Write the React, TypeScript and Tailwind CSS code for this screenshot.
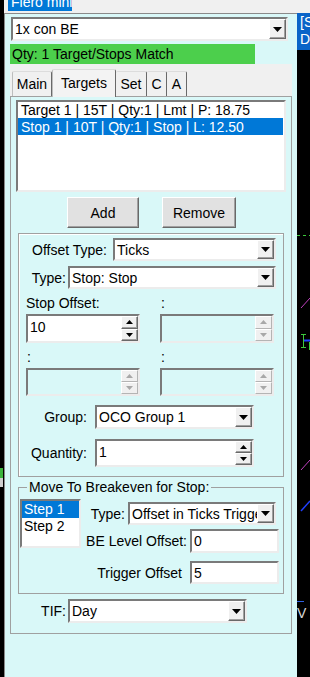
import React from "react";

const SUNKEN =
  "border-2 border-t-[#7a7a7a] border-l-[#7a7a7a] border-b-[#ececec] border-r-[#ececec]";
const RAISED =
  "border border-t-white border-l-white border-b-[#696969] border-r-[#696969] shadow-[inset_-1px_-1px_0_#a0a0a0]";
const RAISED_OFF =
  "border border-t-white border-l-white border-b-[#b4b4b4] border-r-[#b4b4b4]";

function Arrow({ up, w, h, color }: { up?: boolean; w: number; h: number; color: string }) {
  const pts = up ? `0,${h} ${w},${h} ${w / 2},0` : `0,0 ${w},0 ${w / 2},${h}`;
  return (
    <svg width={w} height={h} viewBox={`0 0 ${w} ${h}`}>
      <polygon points={pts} fill={color} />
    </svg>
  );
}

function Combo({ value, className }: { value: string; className: string }) {
  return (
    <div className={`flex bg-white ${SUNKEN} ${className}`}>
      <div className="flex-1 min-w-0 flex items-center pl-[2px] overflow-hidden whitespace-nowrap leading-[16px]">
        {value}
      </div>
      <div className={`w-[17px] shrink-0 bg-[#f0f0f0] flex items-center justify-center ${RAISED}`}>
        <Arrow w={9} h={5} color="#000" />
      </div>
    </div>
  );
}

function Spin({ value, disabled, className }: { value?: string; disabled?: boolean; className: string }) {
  const btn = disabled ? RAISED_OFF : RAISED;
  const c = disabled ? "#a8a8a8" : "#000";
  return (
    <div className={`flex ${disabled ? "bg-[#d9f8f8]" : "bg-white"} ${SUNKEN} ${className}`}>
      <div className="flex-1 min-w-0 pl-[2px] pt-[3px] leading-[16px]">{value}</div>
      <div className="w-[17px] shrink-0 flex flex-col">
        <div className={`flex-1 bg-[#f0f0f0] flex items-center justify-center ${btn}`}>
          <Arrow up w={7} h={4} color={c} />
        </div>
        <div className={`flex-1 bg-[#f0f0f0] flex items-center justify-center ${btn}`}>
          <Arrow w={7} h={4} color={c} />
        </div>
      </div>
    </div>
  );
}

function TextBox({ value, className }: { value: string; className: string }) {
  return (
    <div className={`flex items-center bg-white pl-[2px] leading-[16px] ${SUNKEN} ${className}`}>{value}</div>
  );
}

export default function App() {
  return (
    <div className="w-[310px] h-[677px] bg-black flex flex-col overflow-hidden text-[14px] text-black font-['Liberation_Sans',Arial,sans-serif]">
      {/* title strip */}
      <div className="h-[13px] shrink-0 flex bg-[#f0f0f0]">
        <div className="w-[4px] bg-black" />
        <div className="ml-[4px] w-[64px] h-[11px] bg-[#0078d7] overflow-hidden text-white">
          <span className="block -mt-[6px] pl-[3px] leading-[16px] whitespace-nowrap">Flero mini</span>
        </div>
      </div>

      <div className="flex flex-1 min-h-0">
        {/* left edge */}
        <div className="w-[4px] flex flex-col">
          <div className="h-[455px]" />
          <div className="h-[10px] w-[3px] bg-[#3cb43c]" />
          <div className="h-[9px] w-[3px] bg-[#cfcfcf]" />
        </div>

        {/* panel */}
        <div className="w-[293px] bg-[#d9f8f8] border-t border-l border-[#8a8a8a] flex flex-col">
          <Combo value="1x con BE" className="ml-[6px] mt-[3px] w-[277px] h-[24px]" />

          <div className="ml-[5px] mt-[3px] w-[245px] h-[20px] bg-[#4ccf4c] pl-[2px] flex items-center leading-[16px]">
            Qty: 1 Target/Stops Match
          </div>

          {/* tab control */}
          <div className="ml-[5px] w-[282px] flex flex-col">
            <div className="h-[32px] bg-[#f0f0f0] flex items-end pl-[2px]">
              <div className="w-[40px] h-[25px] border-t border-l border-r border-t-[#dcdcdc] border-l-[#bdbdbd] border-r-[#696969] rounded-t-[2px] text-center pt-[4px] leading-[16px]">
                Main
              </div>
              <div className="relative z-10 -mb-[1px] w-[64px] h-[28px] bg-[#f3f3f3] border-t border-l border-r border-t-[#dcdcdc] border-l-[#bdbdbd] border-r-[#696969] rounded-t-[2px] text-center pt-[5px] leading-[16px]">
                Targets
              </div>
              <div className="w-[31px] h-[25px] border-t border-r border-t-[#dcdcdc] border-r-[#696969] rounded-t-[2px] text-center pt-[4px] leading-[16px]">
                Set
              </div>
              <div className="w-[20px] h-[25px] border-t border-r border-t-[#dcdcdc] border-r-[#696969] rounded-t-[2px] text-center pt-[4px] leading-[16px]">
                C
              </div>
              <div className="w-[20px] h-[25px] border-t border-r border-t-[#dcdcdc] border-r-[#696969] rounded-t-[2px] text-center pt-[4px] leading-[16px]">
                A
              </div>
            </div>

            {/* tab page */}
            <div className="h-[538px] border border-[#a0a0a0] bg-[#d9f8f8] flex flex-col">
              <div className={`ml-[5px] mt-[3px] w-[270px] h-[92px] bg-white ${SUNKEN} leading-[16px]`}>
                <div className="h-[16px] pl-[3px] whitespace-nowrap">Target 1 | 15T | Qty:1 | Lmt | P: 18.75</div>
                <div className="h-[17px] pl-[3px] pt-[1px] mr-[1px] bg-[#0078d7] text-white whitespace-nowrap">
                  Stop 1 | 10T | Qty:1 | Stop | L: 12.50
                </div>
              </div>

              <div className="flex mt-[5px] ml-[56px] gap-[23px]">
                <div className={`w-[72px] h-[31px] bg-[#e1e1e1] flex items-center justify-center leading-[16px] ${RAISED}`}>
                  Add
                </div>
                <div className={`w-[74px] h-[31px] bg-[#e1e1e1] flex items-center justify-center leading-[16px] ${RAISED}`}>
                  Remove
                </div>
              </div>

              {/* offset group */}
              <div className="ml-[7px] mt-[5px] w-[266px] h-[244px] border border-[#a0a0a0] shadow-[inset_1px_1px_0_#ffffff] flex flex-col leading-[16px]">
                <div className="flex mt-[4px] h-[23px]">
                  <div className="w-[94px] pr-[6px] text-right flex items-center justify-end whitespace-nowrap">Offset Type:</div>
                  <Combo value="Ticks" className="w-[163px] h-[23px]" />
                </div>
                <div className="flex mt-[5px] h-[23px]">
                  <div className="w-[49px] pr-[2px] flex items-center justify-end whitespace-nowrap">Type:</div>
                  <Combo value="Stop: Stop" className="w-[208px] h-[23px]" />
                </div>

                <div className="grid grid-cols-[114px_114px] gap-x-[20px] ml-[7px] mt-[6px]">
                  <div className="h-[16px] whitespace-nowrap">Stop Offset:</div>
                  <div className="h-[16px] pl-[1px]">:</div>
                  <Spin value="10" className="mt-[3px] h-[29px]" />
                  <Spin disabled className="mt-[3px] h-[29px]" />
                  <div className="h-[16px] mt-[6px] pl-[1px]">:</div>
                  <div className="h-[16px] mt-[6px] pl-[1px]">:</div>
                  <Spin disabled className="mt-[3px] h-[28px]" />
                  <Spin disabled className="mt-[3px] h-[28px]" />
                </div>

                <div className="flex mt-[9px] h-[24px]">
                  <div className="w-[76px] pr-[8px] flex items-center justify-end">Group:</div>
                  <Combo value="OCO Group 1" className="w-[159px] h-[24px]" />
                </div>
                <div className="flex mt-[10px] h-[28px]">
                  <div className="w-[76px] pr-[8px] flex items-center justify-end">Quantity:</div>
                  <Spin value="1" className="w-[159px] h-[28px]" />
                </div>
              </div>

              {/* breakeven */}
              <fieldset className="ml-[7px] mt-[2px] w-[266px] h-[115px] border border-[#a0a0a0] leading-[16px]">
                <legend className="ml-[8px] px-[2px] whitespace-nowrap">Move To Breakeven for Stop:</legend>
                <div className="flex">
                  <div className={`ml-[1px] mt-[4px] w-[61px] h-[49px] bg-white ${SUNKEN}`}>
                    <div className="h-[17px] pl-[2px] bg-[#0078d7] text-white">Step 1</div>
                    <div className="h-[17px] pl-[2px]">Step 2</div>
                  </div>
                  <div className="flex flex-col">
                    <div className="flex mt-[7px] h-[23px]">
                      <div className="w-[47px] pr-[3px] flex items-center justify-end">Type:</div>
                      <Combo value="Offset in Ticks Trigger" className="w-[148px] h-[23px]" />
                    </div>
                    <div className="flex mt-[4px] h-[24px]">
                      <div className="w-[109px] pr-[3px] flex items-center justify-end whitespace-nowrap">BE Level Offset:</div>
                      <TextBox value="0" className="w-[89px] h-[24px]" />
                    </div>
                    <div className="flex mt-[8px] h-[23px]">
                      <div className="w-[109px] pr-[8px] flex items-center justify-end whitespace-nowrap">Trigger Offset</div>
                      <TextBox value="5" className="w-[89px] h-[23px]" />
                    </div>
                  </div>
                </div>
              </fieldset>

              <div className="flex mt-[5px] h-[24px] leading-[16px]">
                <div className="w-[57px] pr-[2px] flex items-center justify-end">TIF:</div>
                <Combo value="Day" className="w-[179px] h-[24px]" />
              </div>
            </div>
          </div>
        </div>

        {/* chart edge */}
        <div className="w-[13px] flex flex-col overflow-hidden">
          <div className="h-[37px] bg-[#0a64c8] text-white leading-[17px] pt-[1px] pl-[3px] whitespace-nowrap overflow-hidden">
            <div>[S</div>
            <div>D</div>
          </div>
          <svg width="13" height="627" viewBox="0 0 13 627">
            <line x1="0" y1="185.5" x2="13" y2="185.5" stroke="#3cc83c" strokeDasharray="3 3" />
            <line x1="4" y1="258" x2="13" y2="248" stroke="#c040c0" />
            <line x1="6.5" y1="284" x2="6.5" y2="298" stroke="#3cc83c" />
            <line x1="4" y1="284.5" x2="9" y2="284.5" stroke="#3cc83c" />
            <line x1="4" y1="297.5" x2="9" y2="297.5" stroke="#3cc83c" />
            <line x1="7" y1="290.5" x2="13" y2="290.5" stroke="#2040ff" strokeWidth="2" />
            <line x1="12.5" y1="292" x2="12.5" y2="300" stroke="#3cc83c" />
            <line x1="4" y1="420" x2="13" y2="410" stroke="#c040c0" />
            <line x1="4" y1="461" x2="13" y2="451" stroke="#2040ff" strokeWidth="1.5" />
            <line x1="0" y1="551.5" x2="7" y2="551.5" stroke="#3060e0" />
            <text x="0" y="568" fontSize="14" fill="#d8d8d8" fontFamily="Liberation Sans, Arial, sans-serif">V</text>
          </svg>
        </div>
      </div>
    </div>
  );
}
